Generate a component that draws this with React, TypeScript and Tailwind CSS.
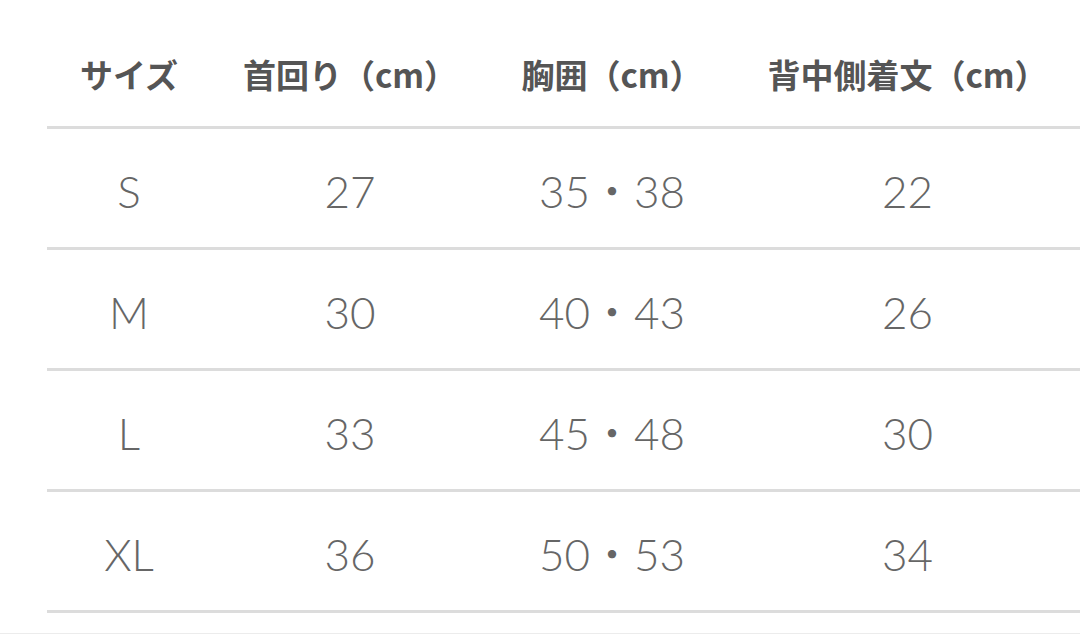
import React from "react";

const rows = [
  ["S", "27", "35・38", "22"],
  ["M", "30", "40・43", "26"],
  ["L", "33", "45・48", "30"],
  ["XL", "36", "50・53", "34"],
];

const headers = ["サイズ", "首回り（cm）", "胸囲（cm）", "背中側着文（cm）"];

const grid = "grid grid-cols-[164px_278px_246px_345px]";

export default function App() {
  return (
    <div className="h-[635px] w-[1080px] bg-white flex flex-col overflow-hidden">
      <div className="pl-[47px]">
        {/* header */}
        <div
          className={`${grid} h-[129px] pt-[26px] pb-[3px] border-b-[3px] border-[#dcdcdc] items-center`}
        >
          {headers.map((h) => (
            <div
              key={h}
              className="text-center text-[33px] font-bold text-[#555] leading-none"
              style={{ fontFamily: '"Noto Sans CJK JP", sans-serif' }}
            >
              {h}
            </div>
          ))}
        </div>
        {/* body */}
        {rows.map((r, i) => (
          <div
            key={i}
            className={`${grid} h-[121px] border-b-[3px] border-[#dcdcdc] items-center`}
          >
            {r.map((c, j) => (
              <div
                key={j}
                className="text-center text-[44px] font-light text-[#666] leading-none pt-[6px]"
                style={{ fontFamily: '"Lato", "Noto Sans CJK JP", sans-serif' }}
              >
                {c}
              </div>
            ))}
          </div>
        ))}
      </div>
      <div className="flex-1" />
      <div className="h-px bg-[#ececec] mb-[1px]" />
    </div>
  );
}
